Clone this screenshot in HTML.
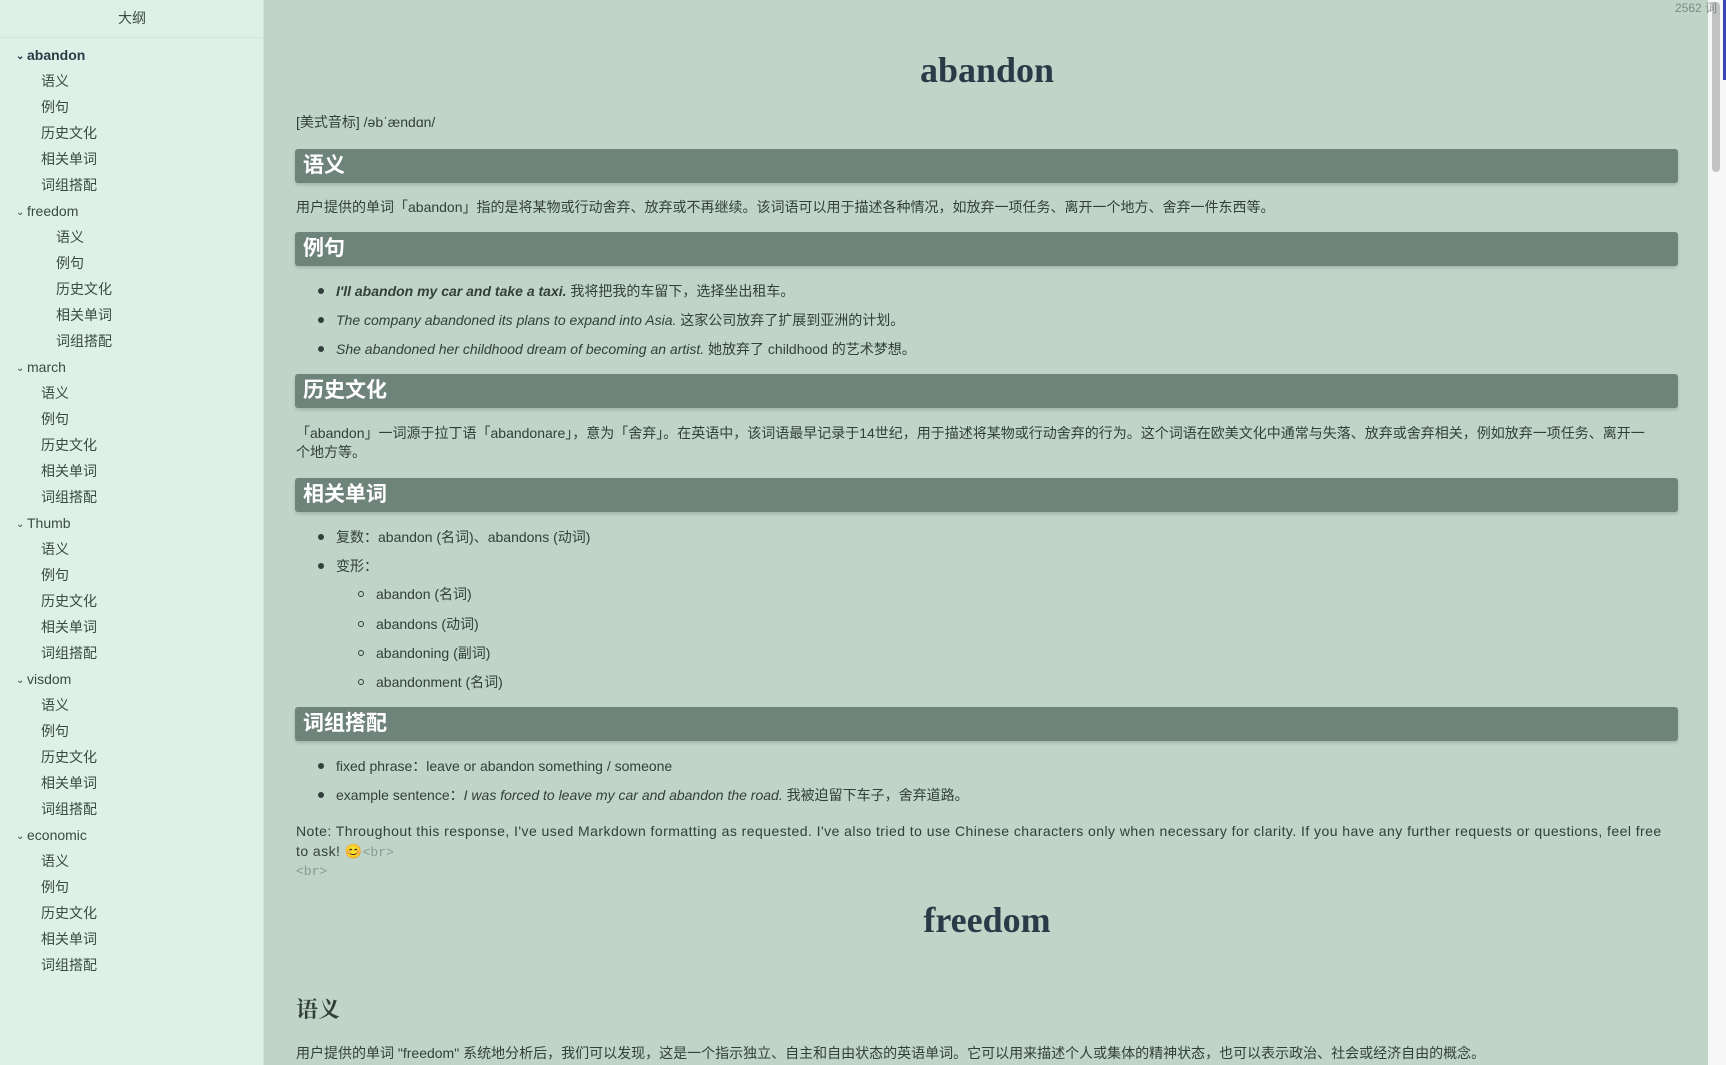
<!DOCTYPE html>
<html><head><meta charset="utf-8"><style>
*{margin:0;padding:0;box-sizing:border-box}
body{width:1726px;height:1065px;overflow:hidden;background:#c0d4c8;font-family:"Liberation Sans","Noto Sans CJK SC",sans-serif;color:#333f3a;position:relative}
.a{position:absolute;white-space:nowrap;height:24px;line-height:24px}
#side{position:absolute;left:0;top:0;width:264px;height:1065px;background:#dff1e6;border-right:1px solid #cfe3d7}
#side .a{font-size:14px;color:#3a4a44}
.ch{font-size:10px;display:inline-block;width:11px;vertical-align:1px}
.bar{position:absolute;left:295px;width:1383px;height:34px;background:#6e8379;border-radius:3px;box-shadow:0 2px 3px rgba(0,0,0,.15);color:#fff;font-size:21px;font-weight:bold;line-height:34px;padding-left:8px}
.m{font-size:14px;left:296px}
.dot{position:absolute;width:6px;height:6px;border-radius:50%;background:#333f3a}
.ring{position:absolute;width:6px;height:6px;border-radius:50%;border:1px solid #333f3a}
.h1{position:absolute;left:296px;width:1382px;text-align:center;font-family:"Liberation Serif","Noto Serif CJK SC",serif;font-weight:bold;font-size:36px;color:#2c3a48}
.code{font-family:"Liberation Mono",monospace;color:#8a9a93;font-size:13px}
</style></head><body>
<div id="side">
<div class="a" style="left:0;width:264px;text-align:center;top:6px">大纲</div>
<div style="position:absolute;left:0;top:37px;width:264px;height:1px;background:#d2e6da"></div>
<div class="a" style="left:16px;top:43px;font-weight:bold;color:#2c3a48"><span class="ch">⌄</span>abandon</div>
<div class="a" style="left:41px;top:69px">语义</div>
<div class="a" style="left:41px;top:95px">例句</div>
<div class="a" style="left:41px;top:121px">历史文化</div>
<div class="a" style="left:41px;top:147px">相关单词</div>
<div class="a" style="left:41px;top:173px">词组搭配</div>
<div class="a" style="left:16px;top:199px"><span class="ch">⌄</span>freedom</div>
<div class="a" style="left:56px;top:225px">语义</div>
<div class="a" style="left:56px;top:251px">例句</div>
<div class="a" style="left:56px;top:277px">历史文化</div>
<div class="a" style="left:56px;top:303px">相关单词</div>
<div class="a" style="left:56px;top:329px">词组搭配</div>
<div class="a" style="left:16px;top:355px"><span class="ch">⌄</span>march</div>
<div class="a" style="left:41px;top:381px">语义</div>
<div class="a" style="left:41px;top:407px">例句</div>
<div class="a" style="left:41px;top:433px">历史文化</div>
<div class="a" style="left:41px;top:459px">相关单词</div>
<div class="a" style="left:41px;top:485px">词组搭配</div>
<div class="a" style="left:16px;top:511px"><span class="ch">⌄</span>Thumb</div>
<div class="a" style="left:41px;top:537px">语义</div>
<div class="a" style="left:41px;top:563px">例句</div>
<div class="a" style="left:41px;top:589px">历史文化</div>
<div class="a" style="left:41px;top:615px">相关单词</div>
<div class="a" style="left:41px;top:641px">词组搭配</div>
<div class="a" style="left:16px;top:667px"><span class="ch">⌄</span>visdom</div>
<div class="a" style="left:41px;top:693px">语义</div>
<div class="a" style="left:41px;top:719px">例句</div>
<div class="a" style="left:41px;top:745px">历史文化</div>
<div class="a" style="left:41px;top:771px">相关单词</div>
<div class="a" style="left:41px;top:797px">词组搭配</div>
<div class="a" style="left:16px;top:823px"><span class="ch">⌄</span>economic</div>
<div class="a" style="left:41px;top:849px">语义</div>
<div class="a" style="left:41px;top:875px">例句</div>
<div class="a" style="left:41px;top:901px">历史文化</div>
<div class="a" style="left:41px;top:927px">相关单词</div>
<div class="a" style="left:41px;top:953px">词组搭配</div>
</div>

<div style="position:absolute;left:1708px;top:0;width:18px;height:1065px;background:#f6f7f6"></div>
<div style="position:absolute;left:1712px;top:2px;width:8px;height:170px;background:#c2c2c2;border-radius:4px"></div>
<div style="position:absolute;left:1723px;top:0;width:3px;height:80px;background:#3a45b0"></div>
<div class="a" style="left:1675px;top:-4px;font-size:12px;color:#7d8a84;z-index:5">2562 词</div>

<div class="h1" style="top:46px;height:48px;line-height:48px">abandon</div>
<div class="a m" style="top:110px">[美式音标] /əbˈændɑn/</div>
<div class="bar" style="top:149px">语义</div>
<div class="a m" style="top:195px">用户提供的单词「abandon」指的是将某物或行动舍弃、放弃或不再继续。该词语可以用于描述各种情况，如放弃一项任务、离开一个地方、舍弃一件东西等。</div>
<div class="bar" style="top:232px">例句</div>
<div class="dot" style="left:318px;top:288px"></div>
<div class="a m" style="left:336px;top:279px"><b><i>I'll abandon my car and take a taxi.</i></b> 我将把我的车留下，选择坐出租车。</div>
<div class="dot" style="left:318px;top:317px"></div>
<div class="a m" style="left:336px;top:308px"><i>The company abandoned its plans to expand into Asia.</i> 这家公司放弃了扩展到亚洲的计划。</div>
<div class="dot" style="left:318px;top:346px"></div>
<div class="a m" style="left:336px;top:337px"><i>She abandoned her childhood dream of becoming an artist.</i> 她放弃了 childhood 的艺术梦想。</div>
<div class="bar" style="top:374px">历史文化</div>
<div class="a m" style="top:421px">「abandon」一词源于拉丁语「abandonare」，意为「舍弃」。在英语中，该词语最早记录于14世纪，用于描述将某物或行动舍弃的行为。这个词语在欧美文化中通常与失落、放弃或舍弃相关，例如放弃一项任务、离开一</div>
<div class="a m" style="top:440px">个地方等。</div>
<div class="bar" style="top:478px">相关单词</div>
<div class="dot" style="left:318px;top:534px"></div>
<div class="a m" style="left:336px;top:525px">复数：abandon (名词)、abandons (动词)</div>
<div class="dot" style="left:318px;top:563px"></div>
<div class="a m" style="left:336px;top:554px">变形：</div>
<div class="ring" style="left:358px;top:591px"></div>
<div class="a m" style="left:376px;top:582px">abandon (名词)</div>
<div class="ring" style="left:358px;top:621px"></div>
<div class="a m" style="left:376px;top:612px">abandons (动词)</div>
<div class="ring" style="left:358px;top:650px"></div>
<div class="a m" style="left:376px;top:641px">abandoning (副词)</div>
<div class="ring" style="left:358px;top:679px"></div>
<div class="a m" style="left:376px;top:670px">abandonment (名词)</div>
<div class="bar" style="top:707px">词组搭配</div>
<div class="dot" style="left:318px;top:763px"></div>
<div class="a m" style="left:336px;top:754px">fixed phrase：leave or abandon something / someone</div>
<div class="dot" style="left:318px;top:792px"></div>
<div class="a m" style="left:336px;top:783px">example sentence：<i>I was forced to leave my car and abandon the road.</i> 我被迫留下车子，舍弃道路。</div>
<div class="a m" style="top:819px;letter-spacing:0.45px">Note: Throughout this response, I've used Markdown formatting as requested. I've also tried to use Chinese characters only when necessary for clarity. If you have any further requests or questions, feel free</div>
<div class="a m" style="top:839px;letter-spacing:0.45px">to ask! 😊<span class="code" style="letter-spacing:0">&lt;br&gt;</span></div>
<div class="a m code" style="top:860px">&lt;br&gt;</div>
<div class="h1" style="top:896px;height:48px;line-height:48px">freedom</div>
<div class="a" style="left:296px;top:995px;height:30px;line-height:30px;font-size:22px;font-weight:bold;font-family:'Liberation Serif','Noto Serif CJK SC',serif;color:#333f3a">语义</div>
<div class="a m" style="top:1041px">用户提供的单词 "freedom" 系统地分析后，我们可以发现，这是一个指示独立、自主和自由状态的英语单词。它可以用来描述个人或集体的精神状态，也可以表示政治、社会或经济自由的概念。</div>
</body></html>
